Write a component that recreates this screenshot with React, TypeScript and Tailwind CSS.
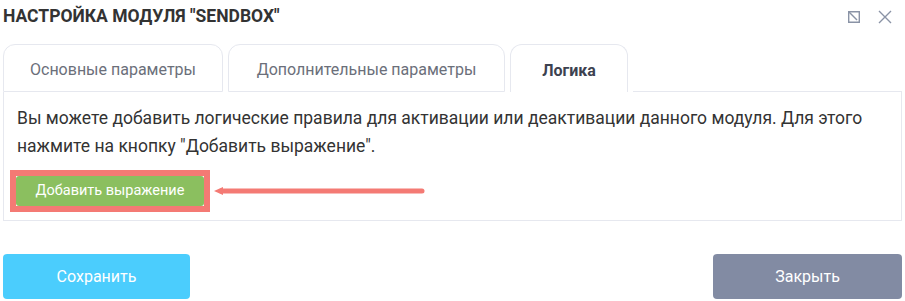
import React from "react";

const tabs = [
  { label: "Основные параметры", width: "w-[220px]", active: false },
  { label: "Дополнительные параметры", width: "w-[277px]", active: false },
  { label: "Логика", width: "w-[118px]", active: true },
];

export default function App() {
  return (
    <div className="h-[301px] w-[905px] bg-white px-[3px] font-['Roboto',sans-serif]">
      <div className="flex h-[33px] items-center justify-between">
        <h1 className="text-[17.5px] font-bold text-[#333333]">НАСТРОЙКА МОДУЛЯ "SENDBOX"</h1>
        <div className="flex items-center gap-[18px] pr-[10px] text-[#8a93a6]">
          <svg width="12" height="12" viewBox="0 0 12 12" fill="none" stroke="currentColor" strokeWidth="1.4">
            <path d="M5 0.7H11.3V11.3H0.7V5" />
            <path d="M1 1L9 9" />
            <path d="M0.7 5V0.7H5" />
          </svg>
          <svg width="14" height="14" viewBox="0 0 14 14" fill="none" stroke="currentColor" strokeWidth="1.4">
            <path d="M1 1L13 13M13 1L1 13" />
          </svg>
        </div>
      </div>

      <div className="mt-[11px] flex h-[48px] items-end gap-[5px]">
        {tabs.map((t) => (
          <div
            key={t.label}
            className={
              t.active
                ? `flex h-[48px] ${t.width} items-center justify-center rounded-t-[12px] border border-b-0 border-[#e6e8ef] bg-white pt-[4px] text-[16px] font-bold text-[#3d4250]`
                : `flex h-[48px] ${t.width} items-center justify-center rounded-t-[12px] border border-[#e6e8ef] bg-white pt-[4px] text-[16px] text-[#6b6f7a]`
            }
          >
            {t.label}
          </div>
        ))}
        <div className="flex-1 border-b border-[#e6e8ef]" />
      </div>

      <div className="h-[129px] border border-t-0 border-[#e6e8ef] px-[13px] pt-[12px]">
        <p className="text-[17.5px] leading-[28px] text-[#333333]">
          Вы можете добавить логические правила для активации или деактивации данного модуля. Для этого
          нажмите на кнопку "Добавить выражение".
        </p>
        <div className="mt-[10px] flex items-center">
          <div className="-ml-[7px] border-[6px] border-[#f47a74]">
            <button className="flex h-[30px] w-[188px] items-center justify-center rounded-[3px] bg-[#8bbf5f] text-[14.5px] text-white">
              Добавить выражение
            </button>
          </div>
          <svg width="214" height="12" viewBox="0 0 214 12" className="ml-[2px]">
            <path d="M2 6L11 2V10Z" fill="#f47a74" />
            <path d="M9 6H210" stroke="#f47a74" strokeWidth="5" strokeLinecap="round" />
          </svg>
        </div>
      </div>

      <div className="mt-[33px] flex justify-between">
        <button className="flex h-[45px] w-[187px] items-center justify-center rounded-[4px] bg-[#4bcdfd] text-[16px] text-white">
          Сохранить
        </button>
        <button className="flex h-[45px] w-[189px] items-center justify-center rounded-[4px] bg-[#828ba3] text-[16px] text-white">
          Закрыть
        </button>
      </div>
    </div>
  );
}
